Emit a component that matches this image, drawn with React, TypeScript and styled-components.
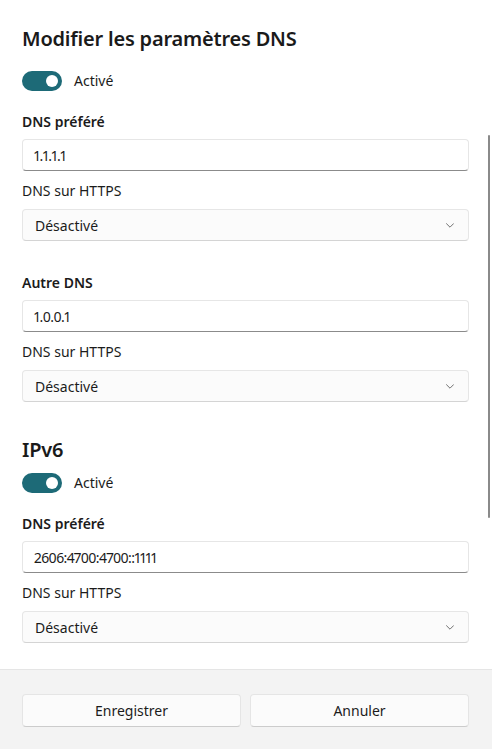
import React from "react";
import styled, { createGlobalStyle } from "styled-components";

const Global = createGlobalStyle`
  html, body {
    margin: 0;
    padding: 0;
    background: #ffffff;
  }
  body {
    font-family: "Noto Sans", "Open Sans", sans-serif;
    color: #1b1b1b;
    -webkit-font-smoothing: antialiased;
  }
  * { box-sizing: border-box; }
`;

const Dialog = styled.div`
  position: relative;
  height: 100vh;
  display: flex;
  flex-direction: column;
  background: #ffffff;
  overflow: hidden;
`;

const Body = styled.div`
  flex: 1;
  overflow: hidden;
  padding: 25px 23px 0 22px;
  display: flex;
  flex-direction: column;
`;

const Title = styled.h1<{ $top?: number }>`
  margin: ${(p) => p.$top ?? 0}px 0 0;
  font-size: 20px;
  line-height: 28px;
  font-weight: 600;
  letter-spacing: -0.2px;
  color: #1a1a1a;
`;

const ToggleRow = styled.label<{ $top: number }>`
  margin-top: ${(p) => p.$top}px;
  display: flex;
  align-items: center;
  gap: 12px;
  height: 20px;
  font-size: 14px;
  line-height: 20px;
  color: #1b1b1b;
`;

const Track = styled.span<{ $on: boolean }>`
  position: relative;
  width: 40px;
  height: 20px;
  border-radius: 10px;
  background: ${(p) => (p.$on ? "#1d6a77" : "transparent")};
  border: ${(p) => (p.$on ? "none" : "1px solid #868686")};
  flex-shrink: 0;
`;

const Knob = styled.span<{ $on: boolean }>`
  position: absolute;
  top: 4px;
  left: ${(p) => (p.$on ? "24px" : "4px")};
  width: 12px;
  height: 12px;
  border-radius: 50%;
  background: #ffffff;
`;

const FieldLabel = styled.div<{ $top: number; $strong?: boolean }>`
  margin-top: ${(p) => p.$top}px;
  font-size: 14px;
  line-height: 20px;
  font-weight: ${(p) => (p.$strong ? 600 : 400)};
  color: #1b1b1b;
`;

const TextBox = styled.div<{ $top: number }>`
  margin-top: ${(p) => p.$top}px;
  height: 32px;
  display: flex;
  align-items: center;
  padding: 0 11px;
  background: #ffffff;
  border: 1px solid #e6e6e6;
  border-bottom: 1px solid #8b8b8b;
  border-radius: 4px;
  font-size: 14px;
  font-variant-numeric: proportional-nums;
  letter-spacing: -0.6px;
  color: #1b1b1b;
`;

const Select = styled.div<{ $top: number }>`
  margin-top: ${(p) => p.$top}px;
  height: 32px;
  display: flex;
  align-items: center;
  justify-content: space-between;
  padding: 0 14px 0 12px;
  background: #fbfbfb;
  border: 1px solid #e6e6e6;
  border-bottom-color: #d4d4d4;
  border-radius: 4px;
  font-size: 14px;
  color: #1b1b1b;
`;

const ScrollThumb = styled.div`
  position: absolute;
  top: 135px;
  right: 2px;
  width: 2px;
  height: 383px;
  border-radius: 1px;
  background: #8a8a8a;
`;

const Footer = styled.div`
  flex-shrink: 0;
  height: 80px;
  background: #f3f3f3;
  border-top: 1px solid #e5e5e5;
  padding: 24px 23px 0 22px;
  display: flex;
  gap: 9px;
`;

const Button = styled.button`
  flex: 1;
  height: 33px;
  background: #fbfbfb;
  border: 1px solid #e5e5e5;
  border-bottom-color: #cccccc;
  border-radius: 4px;
  font-family: inherit;
  font-size: 14px;
  color: #1b1b1b;
  padding: 0;
`;

const Chevron = () => (
  <svg width="8" height="5" viewBox="0 0 8 5" fill="none">
    <path d="M0.5 0.7 L4 4.2 L7.5 0.7" stroke="#707070" strokeWidth="1" strokeLinecap="round" strokeLinejoin="round" />
  </svg>
);

const Toggle = ({ top, on }: { top: number; on: boolean }) => (
  <ToggleRow $top={top}>
    <Track $on={on}>
      <Knob $on={on} />
    </Track>
    {on ? "Activé" : "Désactivé"}
  </ToggleRow>
);

type ServerProps = { label: string; value: string; top: number; strong?: boolean };

const Server = ({ label, value, top, strong }: ServerProps) => (
  <>
    <FieldLabel $top={top} $strong={strong}>{label}</FieldLabel>
    <TextBox $top={7}>{value}</TextBox>
    <FieldLabel $top={10}>DNS sur HTTPS</FieldLabel>
    <Select $top={8}>
      Désactivé
      <Chevron />
    </Select>
  </>
);

export default function App() {
  return (
    <Dialog>
      <Global />
      <Body>
        <Title>Modifier les paramètres DNS</Title>
        <Toggle top={18} on />
        <Server label="DNS préféré" value="1.1.1.1" top={21} strong />
        <Server label="Autre DNS" value="1.0.0.1" top={32} strong />
        <Title $top={34}>IPv6</Title>
        <Toggle top={9} on />
        <Server label="DNS préféré" value="2606:4700:4700::1111" top={21} strong />
      </Body>
      <Footer>
        <Button>Enregistrer</Button>
        <Button>Annuler</Button>
      </Footer>
      <ScrollThumb />
    </Dialog>
  );
}
